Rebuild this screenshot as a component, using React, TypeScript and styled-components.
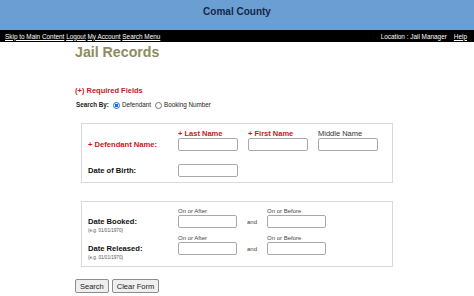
import styled, { createGlobalStyle } from 'styled-components';

const GlobalStyle = createGlobalStyle`
  body {
    margin: 0;
    background: #fff;
    font-family: "Liberation Sans", Arial, sans-serif;
  }
`;

export default function App() {
  return (
    <>
      <GlobalStyle />
      <Header>
        <Title>Comal County</Title>
      </Header>
      <NavBar>
        <NavLinks>
          <NavLink href="#">Skip to Main Content</NavLink>
          <NavLink href="#">Logout</NavLink>
          <NavLink href="#">My Account</NavLink>
          <NavLink href="#">Search Menu</NavLink>
        </NavLinks>
        <NavRight>
          <span>Location : Jail Manager</span>
          <NavLink href="#">Help</NavLink>
        </NavRight>
      </NavBar>

      <Main>
        <Heading>Jail Records</Heading>
        <Required>(+) Required Fields</Required>

        <SearchBy>
          <strong>Search By:</strong>
          <RadioLabel>
            <Radio type="radio" name="by" defaultChecked />
            Defendant
          </RadioLabel>
          <RadioLabel>
            <Radio type="radio" name="by" />
            Booking Number
          </RadioLabel>
        </SearchBy>

        <Box $top={13}>
          <NameGrid>
            <SmallLabel $required style={{ gridArea: 'l1' }}>+ Last Name</SmallLabel>
            <SmallLabel $required style={{ gridArea: 'l2' }}>+ First Name</SmallLabel>
            <SmallLabel style={{ gridArea: 'l3' }}>Middle Name</SmallLabel>
            <RowLabel $required style={{ gridArea: 'name' }}>+ Defendant Name:</RowLabel>
            <TextInput style={{ gridArea: 'i1' }} />
            <TextInput style={{ gridArea: 'i2' }} />
            <TextInput style={{ gridArea: 'i3' }} />
            <RowLabel style={{ gridArea: 'dob' }}>Date of Birth:</RowLabel>
            <TextInput style={{ gridArea: 'i4' }} />
          </NameGrid>
        </Box>

        <Box $top={18}>
          <DateRow label="Date Booked:" />
          <DateRow label="Date Released:" />
        </Box>

        <Buttons>
          <Button type="button">Search</Button>
          <Button type="button">Clear Form</Button>
        </Buttons>
      </Main>
    </>
  );
}

function DateRow({ label }: { label: string }) {
  return (
    <DateGrid>
      <TinyLabel style={{ gridArea: 'a' }}>On or After</TinyLabel>
      <TinyLabel style={{ gridArea: 'b' }}>On or Before</TinyLabel>
      <RowLabel style={{ gridArea: 'lab' }}>{label}</RowLabel>
      <TextInput style={{ gridArea: 'i1' }} />
      <And>and</And>
      <TextInput style={{ gridArea: 'i2' }} />
      <Example>(e.g. 01/01/1970)</Example>
    </DateGrid>
  );
}

const Header = styled.div`
  height: 30px;
  background: #6b9fd4;
  display: flex;
  justify-content: center;
  padding-top: 6px;
  box-sizing: border-box;
`;

const Title = styled.h1`
  margin: 0;
  font-size: 10px;
  line-height: 11px;
  font-weight: bold;
  color: #15264a;
`;

const NavBar = styled.div`
  height: 12px;
  background: #000;
  color: #fff;
  display: flex;
  align-items: center;
  justify-content: space-between;
  padding: 0 7px 0 5px;
  font-size: 6.4px;
`;

const NavLinks = styled.div`
  display: flex;
  gap: 1.8px;
`;

const NavRight = styled.div`
  display: flex;
  gap: 7px;
`;

const NavLink = styled.a`
  color: #fff;
  text-decoration: underline;
`;

const Main = styled.div`
  padding-left: 75px;
`;

const Heading = styled.h2`
  margin: 0;
  font-size: 14.2px;
  line-height: 20px;
  font-weight: bold;
  color: #8e8c60;
`;

const Required = styled.div`
  margin-top: 24px;
  font-size: 7.5px;
  line-height: 10px;
  font-weight: bold;
  color: #c41a22;
`;

const SearchBy = styled.div`
  margin-top: 4px;
  margin-left: 1px;
  display: flex;
  align-items: center;
  gap: 2px;
  font-size: 6.3px;
  line-height: 10px;
  color: #222;
`;

const RadioLabel = styled.label`
  display: flex;
  align-items: center;
  gap: 1px;
`;

const Radio = styled.input`
  appearance: none;
  width: 7px;
  height: 7px;
  margin: 0 1px 0 2px;
  border: 1px solid #767676;
  border-radius: 50%;
  background: #fff;
  box-sizing: border-box;

  &:checked {
    border-color: #1a6fd6;
    background: radial-gradient(circle, #1a6fd6 0 40%, #fff 48%);
  }
`;

const Box = styled.div<{ $top: number }>`
  margin: ${({ $top }) => $top}px 0 0 6px;
  width: 312px;
  box-sizing: border-box;
  border: 1px solid #d8d8d8;
  padding: 5px 6px;
`;

const NameGrid = styled.div`
  display: grid;
  grid-template-columns: 80px 60px 60px 60px;
  grid-template-rows: 9px 13px 13px 13px;
  column-gap: 10px;
  grid-template-areas:
    '. l1 l2 l3'
    'name i1 i2 i3'
    '. . . .'
    'dob i4 . .';
`;

const DateGrid = styled.div`
  display: grid;
  grid-template-columns: 90px 59px 30px 59px;
  grid-template-rows: 8px 13px 6px;
  grid-template-areas:
    '. a . b'
    'lab i1 and i2'
    'eg . . .';
`;

const SmallLabel = styled.div<{ $required?: boolean }>`
  font-size: 7.5px;
  line-height: 9px;
  white-space: nowrap;
  font-weight: ${({ $required }) => ($required ? 'bold' : 'normal')};
  color: ${({ $required }) => ($required ? '#c41a22' : '#333')};
`;

const RowLabel = styled.div<{ $required?: boolean }>`
  align-self: center;
  font-size: 7.6px;
  line-height: 10px;
  font-weight: bold;
  white-space: nowrap;
  color: ${({ $required }) => ($required ? '#c41a22' : '#111')};
`;

const TinyLabel = styled.div`
  font-size: 6px;
  line-height: 8px;
  color: #444;
  white-space: nowrap;
`;

const And = styled.div`
  grid-area: and;
  align-self: center;
  text-align: center;
  font-size: 6px;
  color: #444;
`;

const Example = styled.div`
  grid-area: eg;
  font-size: 4.6px;
  line-height: 6px;
  color: #555;
  white-space: nowrap;
`;

const TextInput = styled.input`
  width: 100%;
  height: 13px;
  box-sizing: border-box;
  margin: 0;
  padding: 0 2px;
  border: 1px solid #a9a9a9;
  border-radius: 2px;
  background: #fff;
`;

const Buttons = styled.div`
  margin-top: 12px;
  display: flex;
  gap: 3px;
`;

const Button = styled.button`
  height: 14px;
  padding: 0 4px;
  font-family: "Liberation Sans", Arial, sans-serif;
  font-size: 7.5px;
  color: #222;
  background: #efefef;
  border: 1px solid #8c8c8c;
  border-radius: 2px;
`;
